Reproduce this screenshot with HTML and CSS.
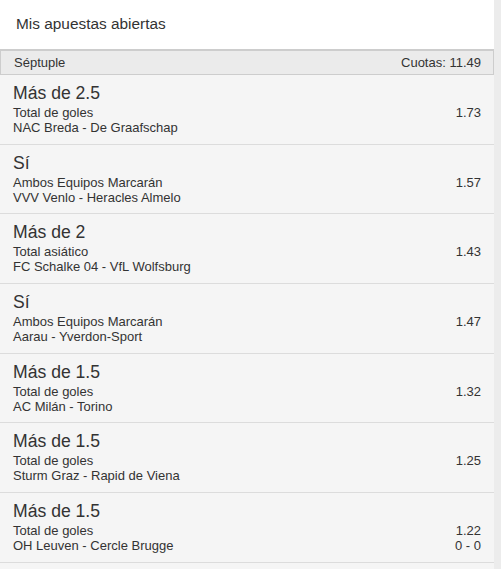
FILE: index.html
```html
<!DOCTYPE html>
<html lang="es">
<head>
    <meta charset="UTF-8">
    <title>Mis apuestas abiertas</title>
    <link rel="stylesheet" href="styles.css">
</head>
<body>
    <div class="bets-panel">
        <div class="panel-title">Mis apuestas abiertas</div>

        <div class="slip-head">
            <span>Séptuple</span>
            <span>Cuotas: 11.49</span>
        </div>

        <div class="leg">
            <div class="leg-info">
                <div class="pick">Más de 2.5</div>
                <div class="market">Total de goles</div>
                <div class="event">NAC Breda - De Graafschap</div>
            </div>
            <div class="leg-side">
                <div class="odds">1.73</div>
            </div>
        </div>

        <div class="leg">
            <div class="leg-info">
                <div class="pick">Sí</div>
                <div class="market">Ambos Equipos Marcarán</div>
                <div class="event">VVV Venlo - Heracles Almelo</div>
            </div>
            <div class="leg-side">
                <div class="odds">1.57</div>
            </div>
        </div>

        <div class="leg">
            <div class="leg-info">
                <div class="pick">Más de 2</div>
                <div class="market">Total asiático</div>
                <div class="event">FC Schalke 04 - VfL Wolfsburg</div>
            </div>
            <div class="leg-side">
                <div class="odds">1.43</div>
            </div>
        </div>

        <div class="leg">
            <div class="leg-info">
                <div class="pick">Sí</div>
                <div class="market">Ambos Equipos Marcarán</div>
                <div class="event">Aarau - Yverdon-Sport</div>
            </div>
            <div class="leg-side">
                <div class="odds">1.47</div>
            </div>
        </div>

        <div class="leg">
            <div class="leg-info">
                <div class="pick">Más de 1.5</div>
                <div class="market">Total de goles</div>
                <div class="event">AC Milán - Torino</div>
            </div>
            <div class="leg-side">
                <div class="odds">1.32</div>
            </div>
        </div>

        <div class="leg">
            <div class="leg-info">
                <div class="pick">Más de 1.5</div>
                <div class="market">Total de goles</div>
                <div class="event">Sturm Graz - Rapid de Viena</div>
            </div>
            <div class="leg-side">
                <div class="odds">1.25</div>
            </div>
        </div>

        <div class="leg">
            <div class="leg-info">
                <div class="pick">Más de 1.5</div>
                <div class="market">Total de goles</div>
                <div class="event">OH Leuven - Cercle Brugge</div>
            </div>
            <div class="leg-side">
                <div class="odds">1.22</div>
                <div class="score">0 - 0</div>
            </div>
        </div>

        <div class="leg"></div>
    </div>
</body>
</html>
```

FILE: styles.css
```css
body {
    margin: 0;
    background: #ececec;
    font-family: "Liberation Sans", Arial, sans-serif;
    color: #333;
    overflow: hidden;
}

.bets-panel {
    width: 494px;
    background: #f5f5f5;
}

.panel-title {
    height: 49px;
    padding-left: 16px;
    background: #fff;
    font-size: 15.4px;
    line-height: 48px;
}

.slip-head {
    display: flex;
    justify-content: space-between;
    align-items: center;
    height: 23px;
    padding: 0 12px 0 13px;
    background: #ebebeb;
    border: 1px solid #cdcdcd;
    border-top-width: 2px;
    font-size: 13px;
}

.leg {
    display: flex;
    justify-content: space-between;
    padding: 7px 13px 8.67px;
    border-bottom: 1px solid #dcdcdc;
    min-height: 53px;
}

.pick {
    font-size: 17.6px;
    line-height: 23px;
}

.market,
.event,
.odds,
.score {
    font-size: 13px;
    line-height: 15px;
}

.leg-side {
    display: flex;
    flex-direction: column;
    align-items: flex-end;
    padding-top: 23px;
}
```
